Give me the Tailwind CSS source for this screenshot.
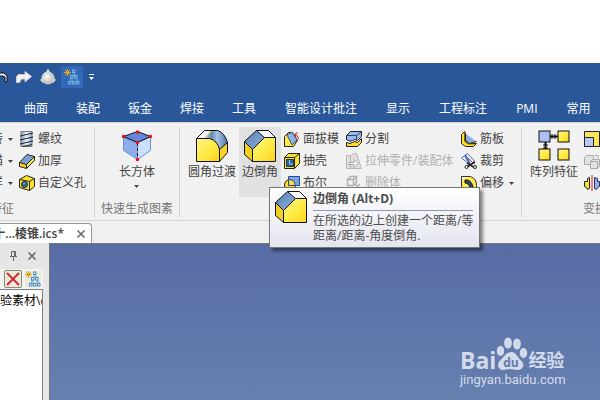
<!DOCTYPE html>
<html lang="zh-CN">
<head>
<meta charset="utf-8">
<title>棱锥.ics</title>
<script src="https://cdn.jsdelivr.net/npm/@tailwindcss/browser@4"></script>
</head>
<body class="flex h-screen flex-col overflow-hidden bg-white font-['Open_Sans','Noto_Sans_CJK_SC',sans-serif] text-xs text-[#444]">
<svg class="absolute size-0" aria-hidden="true">
  <defs>
    <linearGradient id="gy" x1="0" y1="0" x2="1" y2="1"><stop offset="0" stop-color="#fff48a"/><stop offset=".5" stop-color="#ffec4a"/><stop offset="1" stop-color="#fcd116"/></linearGradient>
    <linearGradient id="gb" x1="0" y1="0" x2="1" y2="1"><stop offset="0" stop-color="#5580b4"/><stop offset="1" stop-color="#8fb1da"/></linearGradient>
    <linearGradient id="gr" x1="0" y1="0" x2="1" y2="0"><stop offset="0" stop-color="#d4e0ee"/><stop offset=".3" stop-color="#5d88b8"/><stop offset=".55" stop-color="#a9c4e4"/><stop offset="1" stop-color="#4c77aa"/></linearGradient>
    <linearGradient id="gm" x1="0" y1="0" x2="1" y2="0"><stop offset="0" stop-color="#7d9cc8"/><stop offset=".5" stop-color="#eef4ff"/><stop offset="1" stop-color="#8ca8d8"/></linearGradient>
    <radialGradient id="gs" cx=".4" cy=".35"><stop offset="0" stop-color="#fff"/><stop offset="1" stop-color="#c4c4c4"/></radialGradient>
    <symbol id="chamfer" viewBox="0 0 32 32">
      <path d="M12.500 .5h12l7 7h-11z" fill="#f4f7fc"/>
      <path d="M.5 11.500L12.500 .5l8 7-12 12z" fill="url(#gb)"/>
      <path d="M.5 11.500l8 8v12l-8-7z" fill="#f2cf22"/>
      <path d="M8.500 19.500l12-12h11v24h-23z" fill="url(#gy)"/>
      <path d="M.5 11.500L12.500 .5h12l7 7v24h-23l-8-7zM.5 11.500l8 8v12M8.500 19.500L20.500 7.500M12.500 .5l8 7h11" fill="none" stroke="#111"/>
    </symbol>
    <symbol id="tree" viewBox="0 0 16 16">
      <path d="M3.500 0v7M0 3.500h7M1 1l5 5M6 1l-5 5" stroke="#e5a91d"/>
      <path d="M10 3v3M8 9v3M12 9v3M9 5l-3 7M11 5l3 7" stroke="#69acd9" fill="none" stroke-width=".8"/>
      <g fill="#2f68b0" stroke="#79b6e0"><rect x="8.500" y="1" width="2.500" height="2.500"/><rect x="6.500" y="6.500" width="2.500" height="2.500"/><rect x="10.500" y="6.500" width="2.500" height="2.500"/><rect x="4.500" y="12.500" width="2.500" height="2.500"/><rect x="8.500" y="12.500" width="2.500" height="2.500"/><rect x="12.500" y="12.500" width="2.500" height="2.500"/></g>
    </symbol>
    <symbol id="tree-light" viewBox="0 0 16 16">
      <path d="M3.500 0v7M0 3.500h7M1 1l5 5M6 1l-5 5" stroke="#e0a41a"/>
      <path d="M10 3v3M8 9v3M12 9v3M9 5l-3 7M11 5l3 7" stroke="#4b8dc8" fill="none" stroke-width=".8"/>
      <g fill="#e8f0f4" stroke="#4b8dc8"><rect x="8.500" y="1" width="2.500" height="2.500"/><rect x="6.500" y="6.500" width="2.500" height="2.500"/><rect x="10.500" y="6.500" width="2.500" height="2.500"/><rect x="4.500" y="12.500" width="2.500" height="2.500"/><rect x="8.500" y="12.500" width="2.500" height="2.500"/><rect x="12.500" y="12.500" width="2.500" height="2.500"/></g>
    </symbol>
    <symbol id="caret" viewBox="0 0 5 3"><path d="M0 0h5L2.500 3z" fill="#444"/></symbol>
    <symbol id="close" viewBox="0 0 8 8"><path d="M.5 .5l7 7M7.500 .5l-7 7" stroke="#666" stroke-width="1.500"/></symbol>
  </defs>
</svg>

<header class="mt-[63px] shrink-0 bg-[#2a579a] text-white">
  <div class="flex h-7 items-center">
    <button aria-label="撤销" class="w-4"><svg class="h-3 w-2" viewBox="0 0 8 12"><path d="M0 2h4l3 3v6H5V6L3 5H0" fill="#eee" stroke="#111"/></svg></button>
    <button aria-label="重做"><svg class="h-3 w-4" viewBox="0 0 16 12"><path d="M.5 11.500V5.500l2-2h6.500V.5l6.500 5-6.500 5.500V8H5.500L3.500 11.500z" fill="#f3f3f3" stroke="#c9cbd0"/></svg></button>
    <button aria-label="渲染" class="ml-2"><svg class="size-4" viewBox="0 0 16 16"><path d="M6 4l1-3.500h2L10 4z" fill="#ddd"/><circle cx="8" cy="9" r="6.500" fill="url(#gs)"/><path d="M0 11l2-2 3 3-2 2zM16 11l-2-2-3 3 2 2z" fill="#cfcfcf"/><path d="M4 6l1 1M11 6l-1 1M8 4v1" stroke="#999"/></svg></button>
    <button aria-label="设计树" class="ml-[5px] flex size-[22px] items-center justify-center bg-[#3169b8]"><svg class="size-4"><use href="#tree"/></svg></button>
    <button aria-label="自定义工具栏" class="ml-1.5"><svg class="h-1.5 w-[5px]" viewBox="0 0 5 6"><path d="M0 0h5v1H0zM0 3h5L2.500 6z" fill="#fff"/></svg></button>
  </div>
  <nav class="flex h-[31px] items-center gap-[29px] pt-1 pl-6 whitespace-nowrap">
    <div class="flex gap-7"><a href="#">曲面</a><a href="#">装配</a><a href="#">钣金</a><a href="#">焊接</a><a href="#">工具</a></div>
    <a href="#">智能设计批注</a><a href="#">显示</a><a href="#">工程标注</a><a href="#">PMI</a><a href="#">常用</a>
  </nav>
</header>

<section class="flex h-[99px] shrink-0 border-y border-[#d4d4d4] bg-[#f1f1f1] pt-1 pb-[3px] whitespace-nowrap" aria-label="功能区">
  <div class="flex w-[95px] shrink-0 flex-col border-r border-[#d4d4d4]">
    <div class="flex pt-px">
      <div class="flex w-[13px] flex-col">
        <button class="flex h-[22px] items-center justify-end gap-[5px]">旋转<svg class="h-[3px] w-[5px] shrink-0"><use href="#caret"/></svg></button>
        <button class="flex h-[22px] items-center justify-end gap-[5px]">扫描<svg class="h-[3px] w-[5px] shrink-0"><use href="#caret"/></svg></button>
        <button class="flex h-[22px] items-center justify-end gap-[5px]">放样<svg class="h-[3px] w-[5px] shrink-0"><use href="#caret"/></svg></button>
      </div>
      <div class="ml-1.5 flex flex-col">
        <button class="flex h-[22px] items-center gap-[3px]"><svg class="size-4" viewBox="0 0 16 16"><path d="M2 .5h11v15H2z" fill="url(#gm)" stroke="#777"/><path d="M1 5l13-3M1 9l13-3M1 13l13-3M4 15.500l9-2" stroke="#222" fill="none"/></svg>螺纹</button>
        <button class="flex h-[22px] items-center gap-[3px]"><svg class="size-4" viewBox="0 0 16 16"><path d="M.5 9.500l7 2v4l-7-2z" fill="#f5d021"/><path d="M7.500 11.500l8-8v4l-8 8z" fill="#ffe94a"/><path d="M.5 9.500l7.500-8 7.500 2-8 8z" fill="#7ba0cf"/><path d="M.5 9.500l7.500-8 7.500 2v4l-8 8-7-2zM.5 9.500l7 2v4M7.500 11.500l8-8" fill="none" stroke="#222"/></svg>加厚</button>
        <button class="flex h-[22px] items-center gap-[3px]"><svg class="size-4" viewBox="0 0 16 16"><path d="M.5 4.500l7-4 8 3v8l-5 4-10-3z" fill="#ffe32c"/><path d="M.5 4.500l7-4 8 3v8l-5 4-10-3zM.5 4.500l10 2v9M10.500 6.500l5-3" fill="none" stroke="#222"/><circle cx="5.500" cy="9.500" r="3" fill="#3569a0" stroke="#222"/><path d="M4 9l2-1" stroke="#9bd"/></svg>自定义孔</button>
      </div>
    </div>
    <div class="mt-auto -ml-2.5 leading-4 text-[#777]">特征</div>
  </div>

  <div class="flex w-[85px] shrink-0 flex-col items-center border-r border-[#d4d4d4]">
    <button class="flex flex-col items-center pt-[3px]"><svg class="size-8" viewBox="0 0 32 32"><path d="M2.500 6.500l14 6v17l-14-9z" fill="#8dadea" stroke="#6c90dc"/><path d="M16.500 12.500l13-6v14l-13 9z" fill="#c9dffa" stroke="#6c90dc"/><path d="M2.500 6.500l14-5 13 5-13 6z" fill="#6486dc" stroke="#111"/><path d="M16.500 13v16" stroke="#111" stroke-dasharray="3 2"/><g fill="#f00c0c"><circle cx="2.500" cy="6.500" r="1.700"/><circle cx="16.500" cy="2" r="1.700"/><circle cx="29.500" cy="6.500" r="1.700"/><circle cx="16.500" cy="12.500" r="1.700"/><circle cx="16.500" cy="29.500" r="1.700"/></g></svg><span class="leading-5">长方体</span><svg class="mt-[3px] h-[3px] w-[5px]"><use href="#caret"/></svg></button>
    <div class="mt-auto leading-4 text-[#777]">快速生成图素</div>
  </div>

  <div class="flex w-[342px] shrink-0 border-r border-[#d4d4d4] pl-2">
    <button class="flex h-[70px] flex-col items-center pt-[3px]"><svg class="size-8" viewBox="0 0 32 32"><path d="M.5 8.500l8-8h15l8 12v10l-8 9h-23z" fill="#fbd42b"/><path d="M.5 8.500l8-8h6l-6 8z" fill="#eef3fa"/><path d="M8.500 8.500l8-8h5q7 2 10 12l-8 7q-2-9-10-11z" fill="url(#gr)"/><path d="M.5 8.500h13q8 1 10 11v12h-23z" fill="url(#gy)"/><path d="M.5 8.500l8-8h13q7 2 10 12v10l-8 9h-23zM.5 8.500h13q8 2 10 11v12M23.500 19.500l8-7" fill="none" stroke="#111"/></svg><span class="leading-5">圆角过渡</span></button>
    <button class="ml-[3px] flex h-[70px] w-[42px] flex-col items-center bg-[#e1e1e1] pt-[3px]"><svg class="size-8"><use href="#chamfer"/></svg><span class="leading-5">边倒角</span></button>
    <div class="ml-[3px] flex w-[62px] flex-col pt-px">
      <button class="flex h-[22px] items-center gap-[3px]"><svg class="size-4" viewBox="0 0 16 16"><path d="M.5 5.500l4-4h4l5 8-4 6h-9z" fill="#ffe94a" stroke="#222"/><path d="M3 4l5-3 5 8-5 5z" fill="#8db6e6" stroke="#456"/><path d="M11 3q3 1 3.500 5M11 3l3-1.500M11 3l1 3" fill="none" stroke="#d22" /></svg>面拔模</button>
      <button class="flex h-[22px] items-center gap-[3px]"><svg class="size-4" viewBox="0 0 16 16"><path d="M.5 4.500l4-4h11v10l-5 5H.5z" fill="#ffe02b" stroke="#222"/><path d="M.5 4.500h10v11M10.500 4.500l5-4" fill="none" stroke="#222"/><path d="M2.500 6.500h7v7h-7z" fill="#2c659e" stroke="#16395c"/><path d="M5.500 7v4H9" fill="none" stroke="#a8cdf0"/></svg>抽壳</button>
      <button class="flex h-[22px] items-center gap-[3px]"><svg class="size-4" viewBox="0 0 16 16"><circle cx="6" cy="10" r="5.500" fill="#ffe02b" stroke="#222"/><path d="M4.500 1.500h11v9h-11z" fill="#7ea4e0" stroke="#234b9a"/><path d="M4.500 4.500q7 0 6.500 6H4.500z" fill="#ffd934" stroke="#234b9a"/></svg>布尔</button>
    </div>
    <div class="flex w-[115px] flex-col pt-px">
      <button class="flex h-[22px] items-center gap-[3px]"><svg class="size-4" viewBox="0 0 16 16"><path d="M.5 4.500l4-4h11v5l-4 4q-3-2-5 0t-6-1z" fill="#9bb9ee" stroke="#222"/><path d="M.5 4.500h10l5-4M10.500 4.500v4" fill="none" stroke="#345"/><path d="M.5 11.500q4 2 6 0t5 0l4-4v4l-4 4H.5z" fill="#ffd92c" stroke="#222"/></svg>分割</button>
      <button class="flex h-[22px] items-center gap-[3px] text-[#b0b0b0]" disabled><svg class="size-4" viewBox="0 0 16 16"><path d="M.5 15.500v-13h4v13M4.500 2.500l4-2h2l5 15H.5" fill="#e0e0e0" stroke="#b8b8b8"/><path d="M3 9.500h5v-3l4 4-4 4v-3H3z" fill="#fff" stroke="#aaa"/></svg>拉伸零件/装配体</button>
      <button class="flex h-[22px] items-center gap-[3px] text-[#b0b0b0]" disabled><svg class="size-4" viewBox="0 0 16 16"><path d="M1.500 4.500l3-3h6v6l-3 3h-6zM1.500 4.500h6v6M7.500 4.500l3-3M9 9l5 5M14 9l-5 5" fill="none" stroke="#b0b0b0" stroke-width="1.500"/></svg>删除体</button>
    </div>
    <div class="flex flex-col pt-px">
      <button class="flex h-[22px] items-center gap-[3px]"><svg class="size-4" viewBox="0 0 16 16"><path d="M4.500 2.500v7l4 3 7-2" fill="#8fb0e0" stroke="#222"/><path d="M.5 3.500l3-3 1 2v8l3 2h8l-3 3H4.500l-4-3z" fill="#ffe02b" stroke="#222"/><path d="M3.500 1v9l3 3h7" fill="none" stroke="#776611"/></svg>筋板</button>
      <button class="flex h-[22px] items-center gap-[3px]"><svg class="size-4" viewBox="0 0 16 16"><path d="M.5 5l6-4.500L13.500 8l-4 4z" fill="#e8eefc" stroke="#5070a8"/><path d="M4 2l5 9" stroke="#3e67bb" stroke-width="2"/><path d="M7 5l5 5" stroke="#d33"/><path d="M6 10l8 5M14 9l-8 5" stroke="#222" stroke-width="1.500"/><circle cx="5.500" cy="14" r="1.500" fill="#fff" stroke="#222"/><circle cx="14" cy="14" r="1.500" fill="#fff" stroke="#222"/></svg>裁剪</button>
      <button class="flex h-[22px] items-center gap-[3px]"><svg class="size-4" viewBox="0 0 16 16"><path d="M.5 1.500h9q6 2 6 9v5H.5z" fill="#ffe94a" stroke="#333"/><path d="M1 2h8q-5 0-8 3z" fill="#fff"/><path d="M4 5q6-1 8 7l-3 1Q8 8 4 8z" fill="#2b4a78" stroke="#111"/></svg>偏移<svg class="ml-0.5 h-[3px] w-[5px]"><use href="#caret"/></svg></button>
    </div>
  </div>

  <div class="flex min-w-0 flex-1 flex-col overflow-hidden pl-2">
    <div class="flex">
      <button class="flex shrink-0 flex-col items-center pt-[3px]"><svg class="size-8" viewBox="0 0 32 32"><path d="M12 6.500h8M7.500 12v8" stroke="#111" stroke-width="2"/><path d="M14 4v5M17 4v5M5 15h5M5 18h5" stroke="#111"/><rect x="1" y="1" width="11" height="11" fill="#aac0f0" stroke="#111"/><g fill="url(#gy)" stroke="#111"><rect x="20" y="1" width="11" height="11"/><rect x="1" y="19" width="11" height="11"/><rect x="20" y="19" width="11" height="11"/></g></svg><span class="leading-5">阵列特征</span></button>
      <div class="ml-1.5 flex shrink-0 flex-col pt-px">
        <button aria-label="缩放" class="flex h-[22px] items-center"><svg class="size-4" viewBox="0 0 16 16"><path d="M.5 .5h15v15H.5z" fill="#ffe45a" stroke="#222"/><path d="M.5 6.500h9v9h-9z" fill="#b7c9f3" stroke="#222"/></svg></button>
        <button aria-label="复制" class="flex h-[22px] items-center"><svg class="size-4" viewBox="0 0 16 16"><g fill="#e2e2e2" stroke="#aaa"><path d="M.5 4.500l2-2h7v7l-2 2h-7z"/><path d="M6.500 8.500l2-2h7v7l-2 2h-7zM6.500 8.500h7v7"/></g><path d="M11 2.500h3v3" fill="none" stroke="#aaa"/></svg></button>
        <button aria-label="镜像" class="flex h-[22px] items-center"><svg class="size-4" viewBox="0 0 16 16"><path d="M5.500 2.500v11l-2 1-1-2-2-1v-5h3v-3z" fill="#ffe02b" stroke="#222"/><path d="M10.500 2.500v11l2 1 1-2 2-1v-5h-2v-3z" fill="#8fb5f0" stroke="#235"/><path d="M8 0v16" stroke="#e11"/></svg></button>
      </div>
    </div>
    <div class="mt-auto pl-[53px] leading-4 text-[#777]">变换</div>
  </div>
</section>

<div class="flex h-[22px] shrink-0 items-end bg-[#f0f0f0]">
  <div class="flex h-5 w-[92px] items-center justify-between rounded-tr-sm border-t border-r border-[#999] bg-white pr-1.5">
    <span class="flex w-16 justify-end font-semibold whitespace-nowrap">十...棱锥.ics*</span>
    <button aria-label="关闭文档"><svg class="size-2"><use href="#close"/></svg></button>
  </div>
</div>

<main class="flex min-h-0 flex-1">
  <aside class="flex w-[49px] shrink-0 flex-col overflow-hidden bg-[#e6e6e6]">
    <div class="flex h-[26px] shrink-0 items-center gap-[11px] pl-2.5">
      <button aria-label="固定"><svg class="h-2.5 w-[7px]" viewBox="0 0 7 10"><path d="M1.500 5.500v-5h4v5M0 5.500h7M3.500 6v4M4.500 1v4" fill="none" stroke="#666"/></svg></button>
      <button aria-label="关闭面板"><svg class="size-2"><use href="#close"/></svg></button>
    </div>
    <div class="flex h-5 w-[43px] shrink-0 items-center gap-[3px] bg-[#f2f2f2] pl-1">
      <button aria-label="删除" class="flex size-[18px] shrink-0 items-center justify-center rounded-xs border border-[#8a8880] bg-[#ece9d8]"><svg class="size-3.5" viewBox="0 0 14 14"><path d="M1 1l12 12M13 1L1 13" stroke="#cf2b32" stroke-width="2"/></svg></button>
      <button aria-label="设计树" class="bg-[#ece9d8]"><svg class="size-4"><use href="#tree-light"/></svg></button>
    </div>
    <div class="flex w-[43px] flex-1 items-start justify-end overflow-hidden border-t border-r border-[#7d7d89] bg-white pt-0.5 text-black">
      <span class="w-[42px] shrink-0 overflow-hidden leading-[18px] whitespace-nowrap">验素材\c</span>
    </div>
  </aside>
  <div class="relative flex-1 border-t border-l border-[#777] bg-linear-to-b from-[#576ca5] to-[#6780af]">
    <div class="absolute right-8 bottom-3 flex w-[108px] flex-col text-[#d3dbeb]">
      <div class="flex h-9 items-end">
        <span class="font-['Open_Sans'] text-[23px] leading-6 font-bold">Bai</span>
        <svg class="h-9 w-8 shrink-0" viewBox="0 0 32 36" fill="currentColor"><ellipse cx="4.500" cy="15" rx="3.700" ry="5"/><ellipse cx="12" cy="7" rx="3.900" ry="5.500"/><ellipse cx="21" cy="8" rx="3.900" ry="5.500"/><ellipse cx="27.500" cy="17" rx="3.700" ry="5"/><path d="M15.500 16c5 0 6 6 10 9 4 4 1 9-4 9-3 0-5-1-8-1s-4 1-7 1c-5-1-6-6-2-10s6-8 11-8z"/><text x="15" y="31" text-anchor="middle" font-family="Open Sans" font-weight="700" font-size="12" fill="#6078ad">du</text></svg>
        <span class="text-lg leading-6 font-bold">经验</span>
      </div>
      <span class="font-['Roboto'] text-[13px] leading-4">jingyan.baidu.com</span>
    </div>
  </div>
</main>

<div role="tooltip" class="absolute top-[187px] left-[269px] flex w-[211px] gap-1.5 border border-[#767676] bg-linear-to-b from-white to-[#e4e5f0] pt-[3px] pr-1.5 pb-1 pl-[5px] text-[#4c4c4c] shadow-[3px_3px_3px_rgba(0,0,0,0.45)]">
  <svg class="size-8 shrink-0"><use href="#chamfer"/></svg>
  <div class="flex-1">
    <div class="h-5 border-b border-[#9097b4] leading-4 font-bold">边倒角 (Alt+D)</div>
    <p class="pt-0.5 leading-[15px] whitespace-nowrap">在所选的边上创建一个距离/等<br>距离/距离-角度倒角.</p>
  </div>
</div>
</body>
</html>
